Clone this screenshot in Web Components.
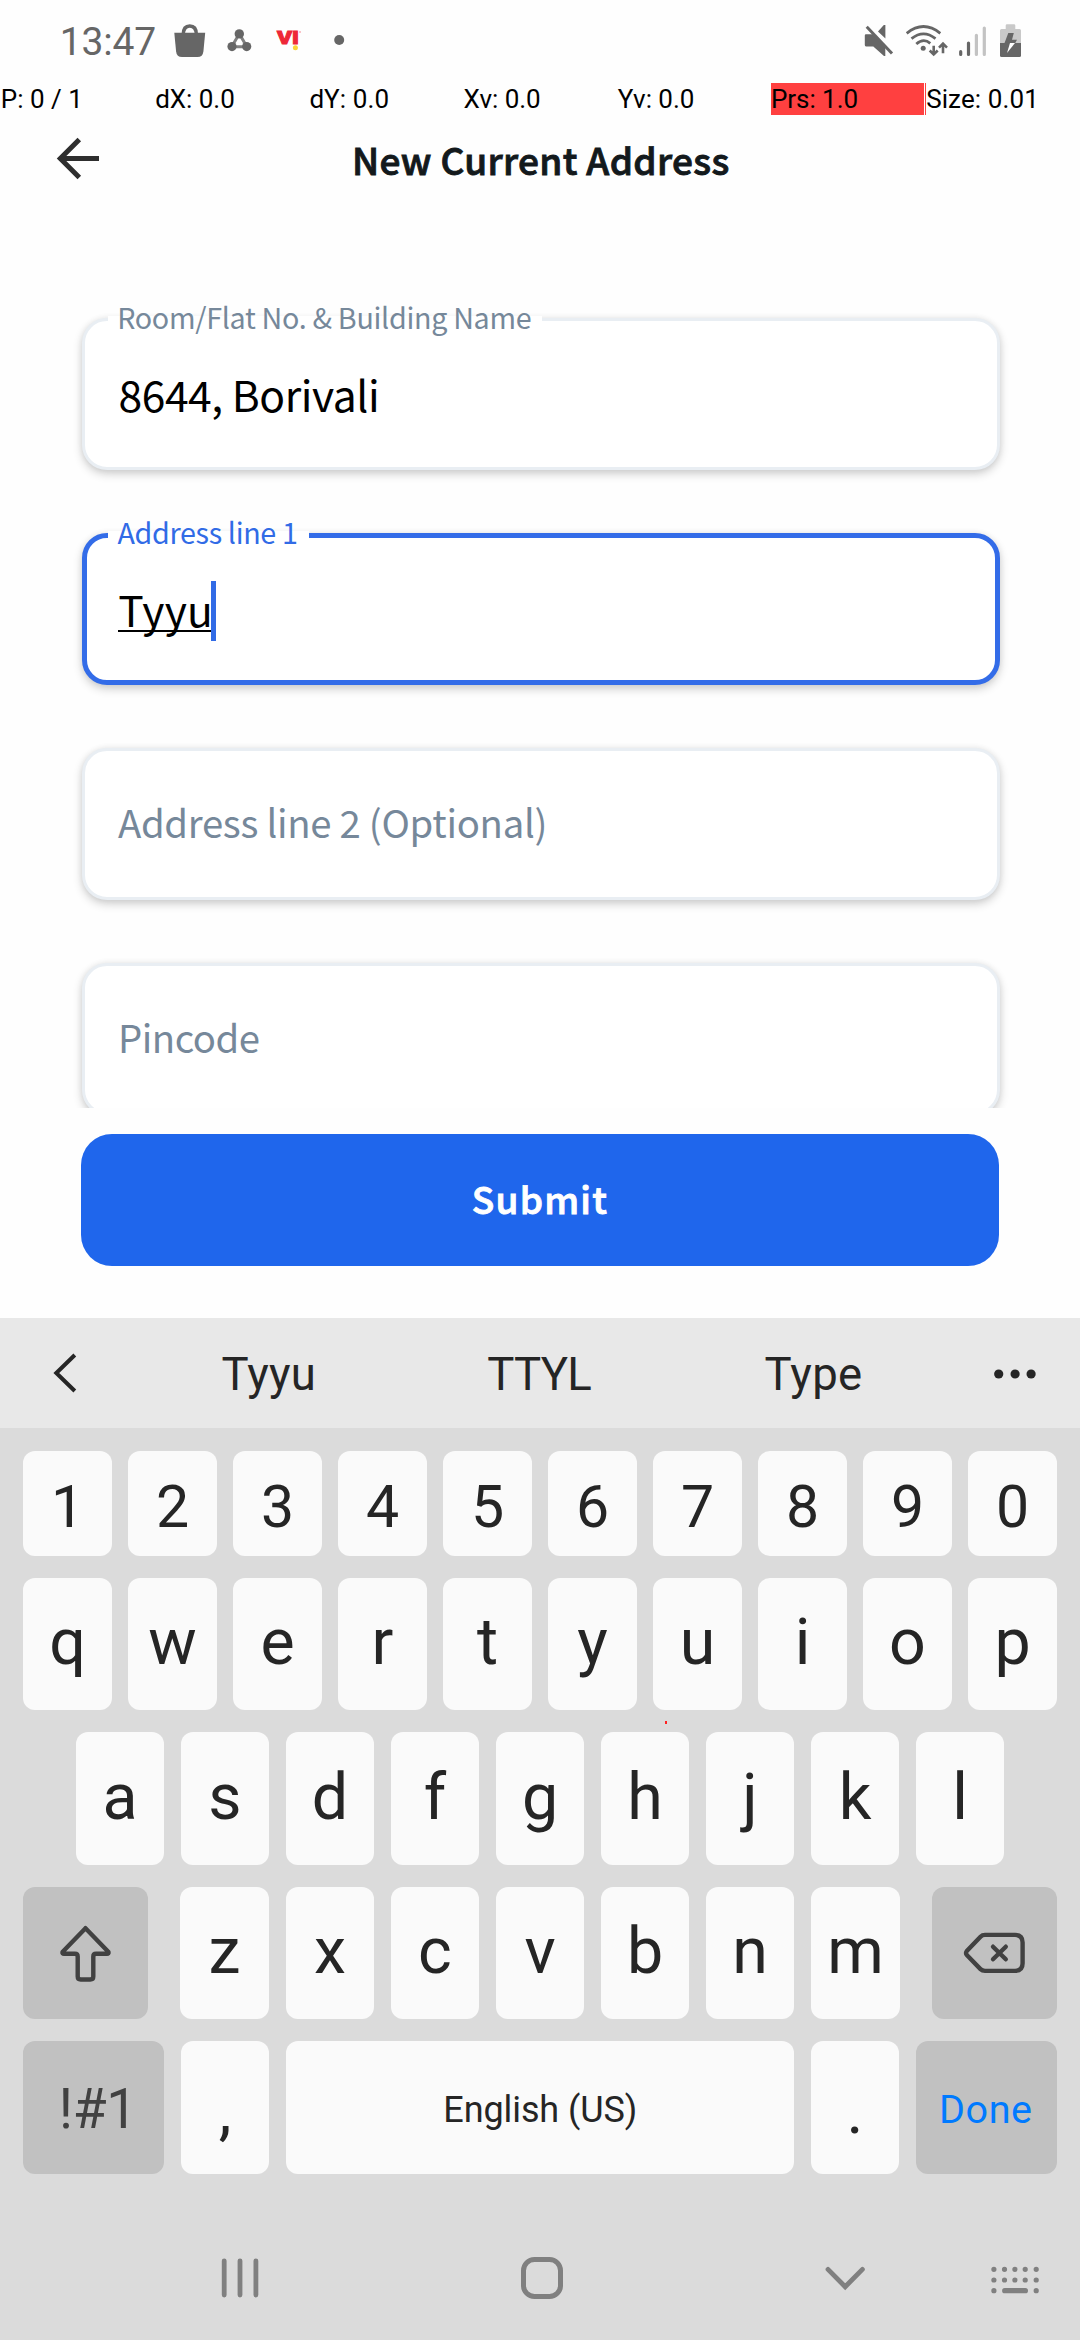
<!DOCTYPE html>
<html lang="en">
<head>
<meta charset="utf-8">
<title>New Current Address</title>
<style>
  html, body { margin: 0; background: #fefefe; }
  body { width: 1080px; height: 2340px; overflow: hidden; }
</style>
</head>
<body>
<address-screen></address-screen>
<script>
const ROBOTO = 'Roboto, "Liberation Sans", sans-serif';
const SOURCE = '"Noto Sans CJK SC", "Noto Sans", sans-serif';
const canvas = document.createElement('canvas').getContext('2d');

function define(name, html, after) {
  const template = document.createElement('template');
  template.innerHTML = html;
  customElements.define(name, class extends HTMLElement {
    constructor() {
      super();
      this.attachShadow({ mode: 'open' }).append(template.content.cloneNode(true));
    }
    connectedCallback() { if (after) after.call(this); }
  });
}

/* A line of text whose box is its ink box: "ink" is the drawn width, tracking adapts to it. */
define('ink-text', `<style>
  :host { display: block; white-space: nowrap; flex: none; }
  :host([semibold]) { -webkit-text-stroke: .9px currentColor; }
  span { display: block; }
</style><span><slot></slot></span>`, function () {
  const size = +this.getAttribute('size');
  const family = this.getAttribute('face') === 'source' ? SOURCE : ROBOTO;
  const weight = this.getAttribute('weight') || '400';
  const dy = +(this.getAttribute('dy') || 0);
  const s = this.style;
  s.font = `${weight} ${size}px/${Math.round(size * 1.2)}px ${family}`;
  s.marginTop = dy + 'px';
  s.marginBottom = -dy + 'px';
  if (this.hasAttribute('ink')) {
    const ink = +this.getAttribute('ink');
    const text = this.textContent;
    canvas.font = `${weight} ${size}px ${family}`;
    const m = canvas.measureText(text);
    const natural = m.actualBoundingBoxRight + m.actualBoundingBoxLeft;
    s.letterSpacing = ((ink - natural) / (text.length - 1)).toFixed(3) + 'px';
    s.width = ink + 'px';
    this.shadowRoot.querySelector('span').style.marginLeft = m.actualBoundingBoxLeft + 'px';
  }
});

const ICONS = {
  bag: ['174 23 32 35', `<path fill="#666" d="M174.3 32.7H205.2L203.4 51.5Q202.8 57 197.5 57H182Q176.700 57 176.100 51.500Z"/><path fill="none" stroke="#666" stroke-width="3.6" d="M183.300 34.500C183.300 29 185.800 26 189.800 26S196.300 29 196.300 34.500"/>`],
  share: ['226 28 27 25', `<path fill="none" stroke="#808080" stroke-width="3" d="M239.300 33.700L231.700 46.800H246.900Z"/><g fill="#666"><circle cx="239.300" cy="33.900" r="4.700"/><circle cx="232" cy="46.600" r="4.600"/><circle cx="246.700" cy="46.600" r="4.600"/></g>`],
  vi: ['276 29 26 23', `<text x="277" y="43.700" font-family="Roboto" font-weight="900" font-size="17.500" textLength="22" lengthAdjust="spacingAndGlyphs" fill="#ee2737" stroke="#ee2737" stroke-width=".9">VI</text><circle cx="295.400" cy="47.800" r="2.500" fill="#fbd237"/><path d="M299 32H301" stroke="#f58a93" stroke-width="1"/>`],
  dot: ['334 34 11 12', `<circle cx="339.200" cy="40" r="5" fill="#666"/>`],
  mute: ['864 23 31 35', `<g fill="#666"><path d="M866 34.300H872.800L885.300 46.800V56H884L873.300 46.400H866Q864.800 46.400 864.800 45V35.500Q864.800 34.300 866 34.300Z"/><path d="M878 31.500L883.800 25H885.400V38.500Z"/></g><path d="M866.700 26.800L892 53.500" stroke="#666" stroke-width="3"/>`],
  wifi: ['905 23 44 35', `<g fill="none" stroke="#666" stroke-width="2.800"><path d="M906.700 33.300Q923.500 19.800 940.300 33.300"/><path d="M911.500 38.700Q923.500 29 935.500 38.700"/><path d="M916.300 44Q923.500 37.700 930.300 43.300"/></g><circle cx="923.200" cy="48.300" r="2.500" fill="#666"/><g fill="none" stroke="#666" stroke-width="2.600"><path d="M933.700 45.700V54.500M929.700 50.500L933.700 54.500L937.700 50.500M943 53.300V43.500M939 47.700L943 43.700L947 47.700"/></g>`],
  signal: ['959 23 28 35', `<g stroke-width="3.200" stroke-linecap="round"><path stroke="#666" d="M960.700 51.700V54.500M968.500 43V54.500"/><path stroke="#c3c3c3" d="M976.400 35.300V54.500M984.300 28V54.500"/></g>`],
  battery: ['999 23 23 35', `<path fill="#c9c9c9" d="M1005.700 29V25.500Q1005.700 24.300 1007 24.300H1014Q1015.300 24.300 1015.300 25.500V29H1019.500Q1021 29 1021 30.500V43H1000V30.500Q1000 29 1001.500 29Z"/><path fill="#666" d="M1000 43H1021V55.500Q1021 57 1019.500 57H1001.500Q1000 57 1000 55.500Z"/><path fill="#666" d="M1008.300 33H1013.800L1012 39.800H1017L1015.200 43H1004.500Z"/><path fill="#fff" d="M1010 43H1015L1007 53Z"/>`],
  back: ['56 136 45 45', `<path fill="none" stroke="#2e2e2e" stroke-width="5" d="M99 158.500H60M79.300 139.500L60.300 158.500L79.300 177.500"/>`],
  left: ['52 1352 26 42', `<path fill="none" stroke="#252525" stroke-width="4" d="M74.800 1355L56.300 1373L74.800 1391"/>`],
  more: ['992 1366 46 16', `<g fill="#252525"><circle cx="998.700" cy="1374" r="4.600"/><circle cx="1015.100" cy="1374" r="4.600"/><circle cx="1031.100" cy="1374" r="4.600"/></g>`],
  shift: ['58 1923 55 61', `<path fill="none" stroke="#414141" stroke-width="4.400" stroke-linejoin="round" d="M85.500 1928.200L62.500 1952Q62 1953.700 64 1953.700H75Q77.700 1953.700 77.700 1956.500V1976.500Q77.700 1979.500 80.700 1979.500H90.300Q93.300 1979.500 93.300 1976.500V1956.500Q93.300 1953.700 96 1953.700H107Q109 1953.700 108.500 1952Z"/>`],
  backspace: ['962 1930 65 46', `<path fill="none" stroke="#414141" stroke-width="4.400" stroke-linejoin="round" d="M966.800 1951L980.500 1936.700Q982.300 1934.900 985 1934.900H1015Q1022.600 1934.900 1022.600 1942.500V1963.300Q1022.600 1970.900 1015 1970.900H985Q982.300 1970.900 980.500 1969.100L966.800 1955Q965.300 1953 966.800 1951Z"/><path fill="none" stroke="#414141" stroke-width="4.400" stroke-linecap="round" d="M993 1946.700L1005.800 1959.300M1005.800 1946.700L993 1959.300"/>`],
  recents: ['221 2256 38 44', `<path stroke="#808080" stroke-width="4.800" stroke-linecap="round" d="M224.200 2260.800V2295M240 2260.800V2295M255.900 2260.800V2295"/>`],
  home: ['520 2255 44 46', `<rect x="523.500" y="2259.500" width="37" height="37" rx="11" fill="none" stroke="#808080" stroke-width="5"/>`],
  down: ['824 2265 43 27', `<path fill="none" stroke="#808080" stroke-width="4.800" stroke-linecap="round" d="M828 2269.400L845.200 2286.800L862.400 2269.400"/>`],
  keyboard: ['990 2265 50 30', `<path fill="none" stroke="#808080" stroke-width="5.200" stroke-linecap="round" d="M993.900 2269.300h.01M1004.500 2269.300h.01M1014.900 2269.300h.01M1025.200 2269.300h.01M1036.200 2269.300h.01M993.900 2280h.01M1004.500 2280h.01M1014.900 2280h.01M1025.200 2280h.01M1036.200 2280h.01M993.900 2290.700h.01M1036.200 2290.700h.01M1004.700 2290.700H1025.400"/>`]
};
define('ui-icon', `<style>:host { display: block; flex: none; } svg { display: block; }</style><div></div>`, function () {
  const [box, body] = ICONS[this.getAttribute('name')];
  const [, , w, h] = box.split(' ');
  this.shadowRoot.querySelector('div').innerHTML =
    `<svg viewBox="${box}" width="${w}" height="${h}">${body}</svg>`;
});

define('status-bar', `<style>
  :host { display: flex; height: 83px; align-items: flex-start; box-sizing: border-box; padding: 23px 58px 0 62.700px; color: #666; }
  .end { margin-left: auto; display: flex; }
</style>
<ink-text size="39" ink="92.600" dy="-4">13:47</ink-text>
<ui-icon name="bag" style="margin-left:18.700px"></ui-icon>
<ui-icon name="share" style="margin:5px 0 0 20px"></ui-icon>
<ui-icon name="vi" style="margin:6px 0 0 23px"></ui-icon>
<ui-icon name="dot" style="margin:11px 0 0 32px"></ui-icon>
<div class="end">
  <ui-icon name="mute"></ui-icon>
  <ui-icon name="wifi" style="margin-left:10px"></ui-icon>
  <ui-icon name="signal" style="margin-left:10px"></ui-icon>
  <ui-icon name="battery" style="margin-left:12px"></ui-icon>
</div>`);

define('pointer-bar', `<style>
  :host { display: flex; height: 32px; gap: 1px; color: #000; }
  div { width: 153.200px; box-sizing: border-box; padding-left: 2px; display: flex; align-items: center; flex: none; }
  .hot { background: #ff4040; }
  .hot + div { border-left: 1px solid #ff4040; padding-left: 1px; }
</style>
<div style="padding-left:2.800px"><ink-text size="26" ink="75.500">P: 0 / 1</ink-text></div>
<div><ink-text size="26" ink="78">dX: 0.0</ink-text></div>
<div><ink-text size="26" ink="78">dY: 0.0</ink-text></div>
<div style="padding-left:1px"><ink-text size="26" ink="76.500">Xv: 0.0</ink-text></div>
<div style="padding-left:1px"><ink-text size="26" ink="76">Yv: 0.0</ink-text></div>
<div class="hot"><ink-text size="26" ink="84.500">Prs: 1.0</ink-text></div>
<div><ink-text size="26" ink="107">Size: 0.01</ink-text></div>`);

define('page-header', `<style>
  :host { display: flex; height: 175px; flex: none; align-items: flex-start; padding: 21px 0 0 56px; box-sizing: border-box; color: #13191c; }
</style>
<ui-icon name="back"></ui-icon>
<ink-text semibold face="source" weight="500" size="37" ink="373.400" dy="1" style="margin-left:254px">New Current Address</ink-text>`);

define('text-field', `<style>
  :host { display: block; height: 152px; position: relative; box-sizing: border-box; border-radius: 25px; border: 3px solid #e9eef3;
    background: #fff; box-shadow: 0 4px 10px rgba(0,0,0,.19), 0 0 6px rgba(0,0,0,.06); flex: none; }
  :host([focused]) { border: 5px solid #336ce8; }
  .row { height: 100%; display: flex; align-items: center; padding-left: 32px; }
  :host([focused]) .row { padding-left: 30px; }
  .label { position: absolute; left: 23px; top: -21px; height: 36px; display: flex; align-items: center; color: #76889a;
    background: linear-gradient(#fff,#fff) 0 16px / 100% 10px no-repeat; }
  :host([focused]) .label { left: 21px; top: -23px; color: #316be6; }
</style><div class="row"><slot></slot></div><div class="label"><slot name="label"></slot></div>`);

define('key-cap', `<style>
  :host { display: flex; align-items: center; justify-content: center; flex: none; border-radius: 12px; background: #fafafa; color: #252525; }
  :host([dark]) { background: #c1c1c1; color: #414141; }
</style><slot></slot>`, function () { this.style.width = this.getAttribute('w') + 'px'; });

const keys = (letters, w, size, dy) => [...letters].map(c =>
  `<key-cap w="${w}"><ink-text size="${size}" dy="${dy}">${c}</ink-text></key-cap>`).join('');

define('soft-keyboard', `<style>
  :host { display: block; background: #dbdbdb; height: 1022px; position: relative; }
  .suggest { display: flex; align-items: center; height: 110px; background: #e8e8e8; color: #252525; padding: 0 42px 0 52px; box-sizing: border-box; }
  .rows { display: flex; flex-direction: column; gap: 22px; padding: 23px 23px 0; }
  .row { display: flex; height: 132px; gap: 17px; }
  .nav { display: flex; align-items: center; height: 168px; padding-left: 221px; margin-top: 20px; box-sizing: border-box; }
  .touch { position: absolute; left: 665px; top: 403px; width: 2px; height: 3px; background: #f22; }
</style>
<div class="suggest">
  <ui-icon name="left"></ui-icon>
  <ink-text size="45.500" ink="90.300" dy="1.500" style="margin-left:144.400px">Tyyu</ink-text>
  <ink-text size="45.500" ink="103" dy="1.500" style="margin-left:175.600px">TTYL</ink-text>
  <ink-text size="45.500" ink="95.500" dy="1.500" style="margin-left:174.200px">Type</ink-text>
  <ui-icon name="more" style="margin-left:auto;margin-top:2px"></ui-icon>
</div>
<div class="rows">
  <div class="row" style="height:105px;gap:16px">${keys('1234567890', 89, 59, 3)}</div>
  <div class="row" style="gap:16px">${keys('qwertyuiop', 89, 64.500, -2)}</div>
  <div class="row" style="padding-left:53px;height:133px">${keys('asdfghjkl', 88, 64.500, -1)}</div>
  <div class="row">
    <key-cap w="125" dark style="margin-right:15px"><ui-icon name="shift"></ui-icon></key-cap>
    ${keys('z', 89, 64.500, -2)}${keys('xcvbn', 88, 64.500, -2)}${keys('m', 89, 64.500, -2)}
    <key-cap w="125" dark style="margin-left:15px"><ui-icon name="backspace"></ui-icon></key-cap>
  </div>
  <div class="row" style="height:133px">
    <key-cap w="141" dark><ink-text size="55" ink="63.500" dy="1" style="margin-left:2px">!#1</ink-text></key-cap>
    ${keys(',', 88, 64.500, 4)}
    <key-cap w="508"><ink-text size="36" ink="189.400" dy="2.500">English (US)</ink-text></key-cap>
    ${keys('.', 88, 64.500, 4)}
    <key-cap w="141" dark style="color:#007aff"><ink-text size="39.500" ink="89.200" dy="2">Done</ink-text></key-cap>
  </div>
</div>
<div class="nav">
  <ui-icon name="recents"></ui-icon>
  <ui-icon name="home" style="margin-left:261px"></ui-icon>
  <ui-icon name="down" style="margin-left:260px"></ui-icon>
  <ui-icon name="keyboard" style="margin-left:123px;margin-top:4px"></ui-icon>
</div>
<div class="touch"></div>`);

define('address-screen', `<style>
  :host { display: flex; flex-direction: column; height: 2340px; background: #fefefe; }
  .form { height: 818px; overflow: hidden; box-sizing: border-box; padding: 28px 80px 0 82px; display: flex; flex-direction: column; gap: 63px; }
  .value { color: #000; }
  .hint { color: #76889a; }
  .under { position: absolute; left: 31px; top: 91.500px; width: 94px; height: 2.500px; background: #000; }
  .cursor { position: absolute; left: 124px; top: 43px; width: 5px; height: 60px; background: #316be6; }
  .submit { margin: 26px 81px 52px; height: 132px; border-radius: 31px; background: #1f66ec; color: #fff; display: flex; align-items: center; justify-content: center; flex: none; }
</style>
<status-bar></status-bar>
<pointer-bar></pointer-bar>
<page-header></page-header>
<div class="form">
  <text-field><ink-text slot="label" face="source" size="28.700" ink="411.500" dy="-1.500" style="margin:0 11.700px 0 11.200px">Room/Flat No. &amp; Building Name</ink-text>
    <ink-text class="value" face="source" size="42.600" ink="257.500" dy="-1" style="margin-left:2.500px">8644, Borivali</ink-text></text-field>
  <text-field focused><ink-text slot="label" face="source" size="28.700" ink="179.500" dy="-1.500" style="margin:0 12px 0 9.500px">Address line 1</ink-text>
    <ink-text class="value" face="source" size="42.600" ink="89.800" dy="-1" style="margin-left:2.200px">Tyyu</ink-text><span class="under"></span><span class="cursor"></span></text-field>
  <text-field><ink-text class="hint" face="source" size="38.300" ink="426.600" dy="-2.500" style="margin-left:.900px">Address line 2 (Optional)</ink-text></text-field>
  <text-field><ink-text class="hint" face="source" size="38.300" ink="137.700" dy="-2.500" style="margin-left:4px">Pincode</ink-text></text-field>
</div>
<div class="submit"><ink-text semibold face="source" weight="500" size="37" ink="134.300" dy="-2">Submit</ink-text></div>
<soft-keyboard></soft-keyboard>`);
</script>
</body>
</html>
